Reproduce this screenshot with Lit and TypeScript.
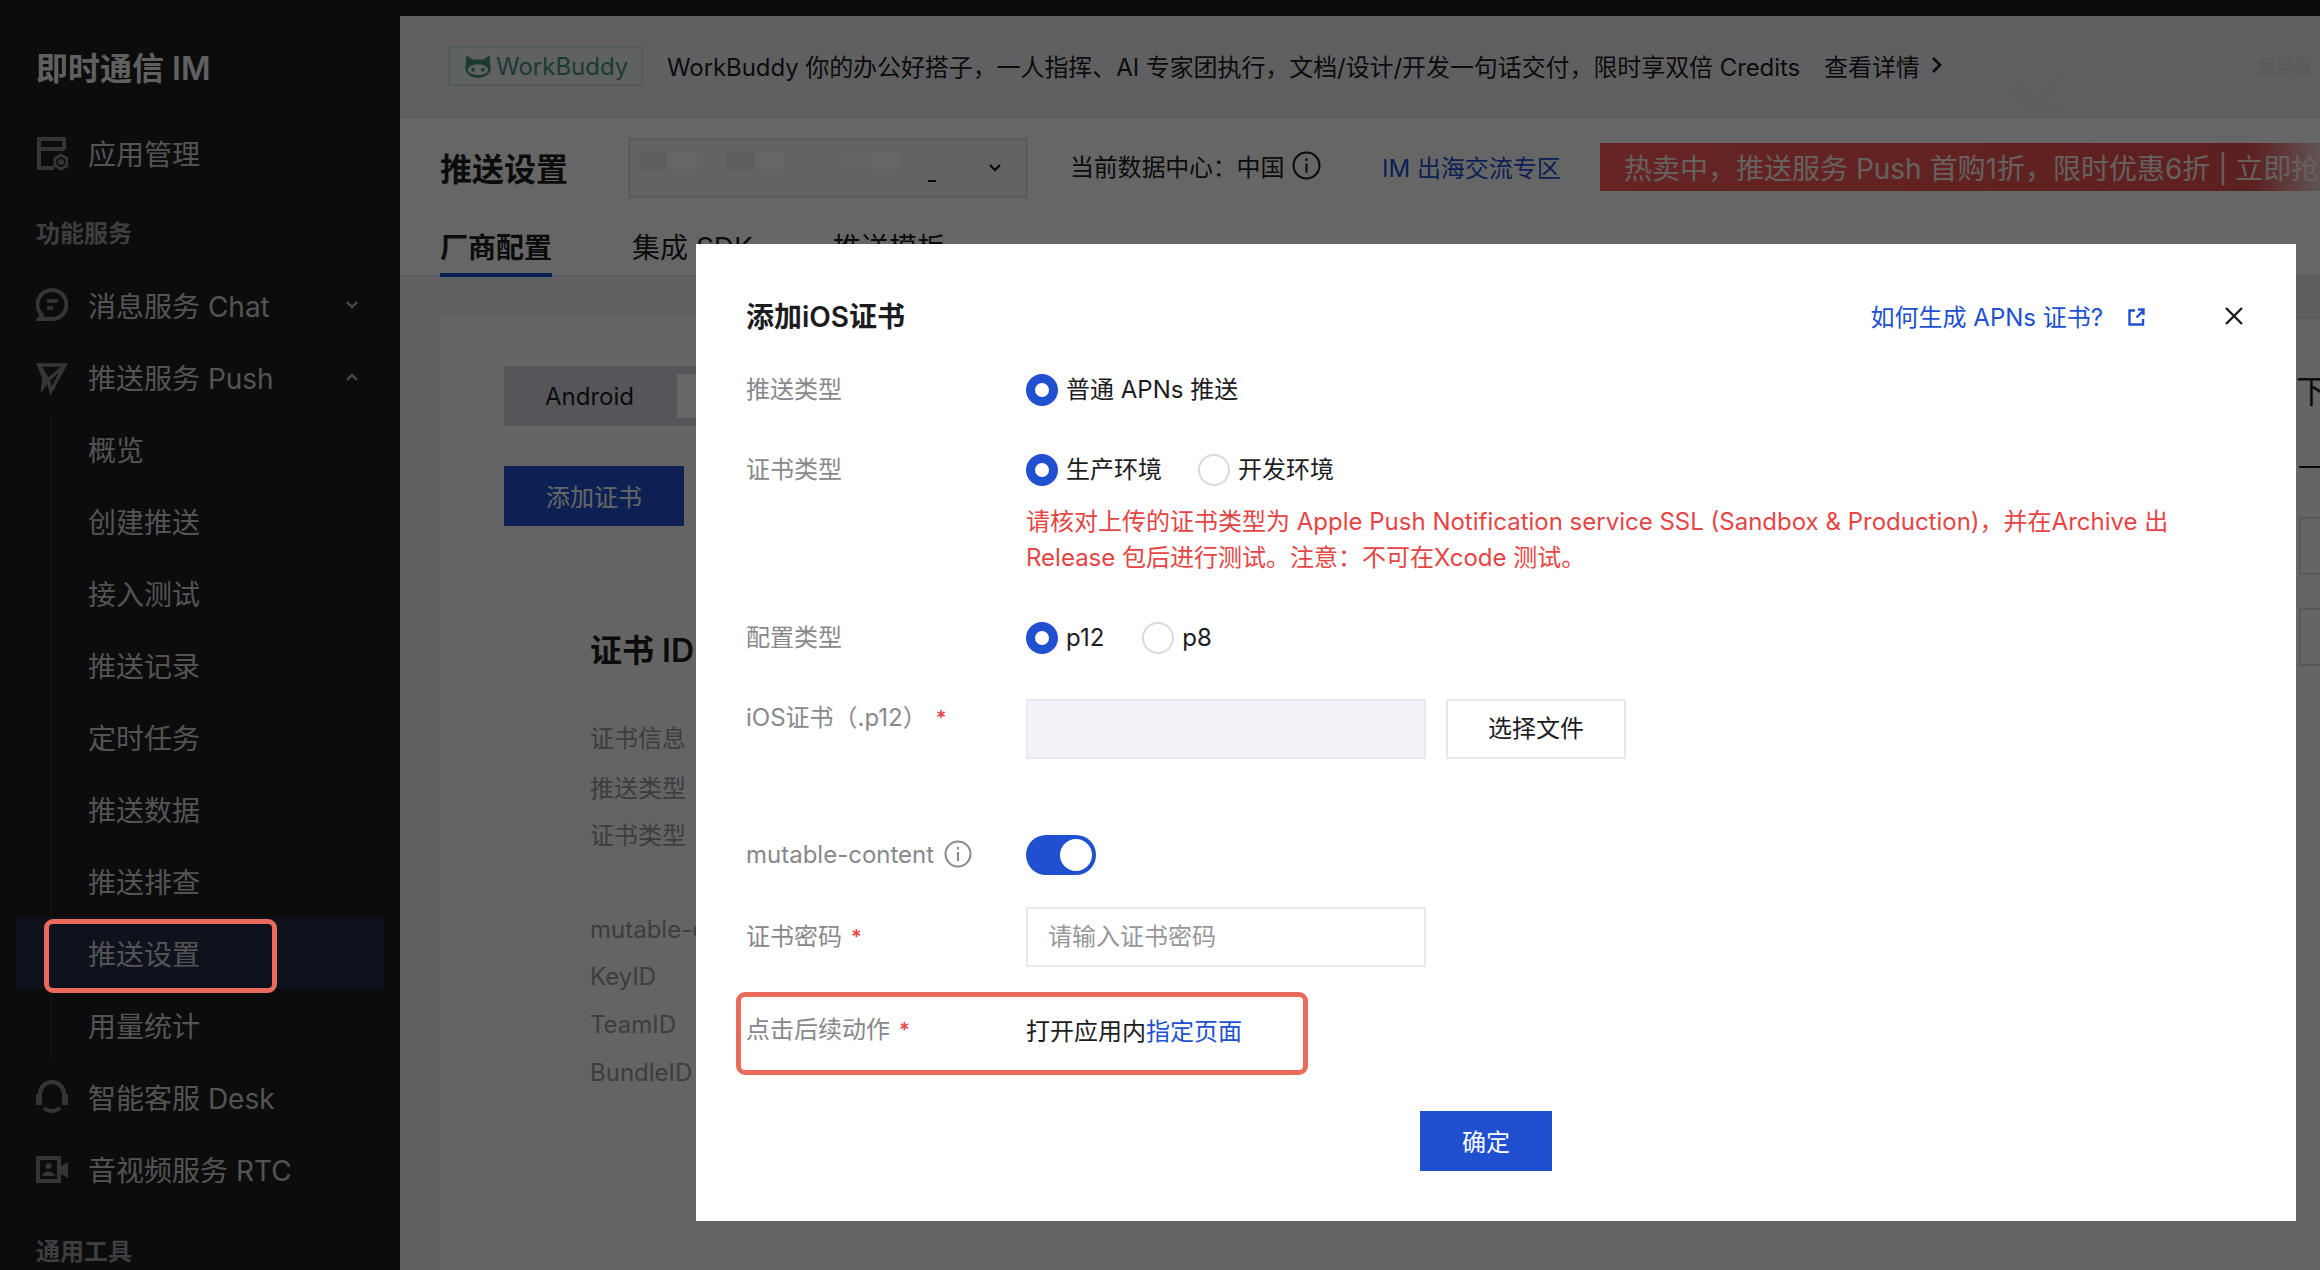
import { LitElement, html, css, svg } from "lit";
import { customElement } from "lit/decorators.js";
import { styleMap } from "lit/directives/style-map.js";

const chev = (up: boolean) => html`<svg class="chev" viewBox="0 0 16 16" fill="none" stroke="currentColor" stroke-width="2.4"><path d=${up ? "M3 11l5-5 5 5" : "M3 5l5 5 5-5"}/></svg>`;
const info = html`<svg class="info" viewBox="0 0 28 28" fill="none" stroke="currentColor" stroke-width="2"><circle cx="14" cy="14" r="12.5"/><path d="M14 12v9M14 7v2.6"/></svg>`;

const masks: [number, number, string][] = [
  [10, 27, "#ebebeb"], [37, 31, "#ffffff"], [96, 29, "#ebebeb"], [125, 28, "#ffffff"],
  [212, 30, "#fdfdfd"], [242, 27, "#ffffff"],
];

@customElement("app-root")
export class AppRoot extends LitElement {
  static styles = css`
    :host { display: block; width: 2320px; height: 1270px; overflow: hidden; position: relative; font-family: Inter, "Noto Sans CJK SC", sans-serif; font-size: 24px; color: #1c1c1f; background: #f4f5f8; }
    * { box-sizing: border-box; }
    .top { height: 16px; background: #1e1e20; }
    .shell { display: grid; grid-template-columns: 400px 1fr; height: 1254px; }

    .side { background: #1e1e20; color: #cfcfd2; display: flex; flex-direction: column; }
    .brand { height: 101px; display: flex; align-items: center; padding: 0 0 2px 36px; font-size: 32px; font-weight: 600; color: #f0f0f2; flex: none; }
    .row { height: 72px; display: flex; align-items: center; padding: 0 36px; font-size: 28px; gap: 20px; flex: none; }
    .row .ico { width: 32px; height: 36px; color: #85868a; flex: none; }
    .row .lbl { flex: 1; }
    .chev { width: 16px; height: 16px; color: #b4b4b6; margin-right: 4px; }
    .sect { font-size: 24px; font-weight: 600; color: #9a9b9e; padding-left: 36px; flex: none; display: flex; align-items: center; }
    .s1 { height: 80px; padding-top: 4px; }
    .s2 { height: 88px; }
    .subs { border-left: 2px solid #2a2a2c; margin-left: 50px; }
    .sub { height: 72px; display: flex; align-items: center; padding-left: 36px; font-size: 28px; position: relative; }
    .sub.on::before { content: ""; position: absolute; left: -36px; right: 16px; top: 0; bottom: 0; background: #232e48; }
    .sub span { position: relative; }
    .mark { position: absolute; border: 5px solid #ea6a5c; border-radius: 9px; pointer-events: none; z-index: 5; }
    .mark.a { left: 44px; top: 919px; width: 233px; height: 74px; }

    .main { display: flex; flex-direction: column; min-width: 0; background: #f1f2f6; overflow: hidden; }
    .promo { height: 102px; flex: none; display: flex; align-items: center; padding: 0 0 2px 48px; background: #eff1f5; border-bottom: 2px solid #e5e7ec; position: relative; white-space: nowrap; letter-spacing: -0.08px; }
    .wb { height: 40px; width: 195px; border: 2px solid #cfe4dc; background: #eef5f2; color: #46917f; display: flex; align-items: center; padding-left: 13px; gap: 3px; margin: 2px 24px 0 0; flex: none; letter-spacing: 0; }
    .wb svg { width: 30px; height: 25px; flex: none; }
    .more { margin-left: 24px; display: flex; align-items: center; gap: 10px; }
    .more svg { width: 14px; height: 20px; }
    .free { position: absolute; left: 1858px; top: 36px; font-size: 18px; font-weight: 600; color: #dfe0e3; }
    .deco { position: absolute; left: 1610px; top: 58px; width: 58px; height: 40px; color: #e9eaee; filter: blur(2px); }

    .pagehd { background: #fff; flex: none; }
    .head { height: 72px; display: flex; align-items: center; margin-top: 14px; padding-left: 40px; white-space: nowrap; }
    .head h1 { font-size: 32px; font-weight: 600; margin: 0 0 2px; width: 188px; flex: none; }
    .sel { width: 400px; height: 60px; border: 2px solid #e2e3ee; background: #f8f8f8; display: flex; align-items: center; justify-content: flex-end; padding-right: 23px; margin-right: 42px; position: relative; flex: none; }
    .sel .chev { color: #1c1c1f; margin: 0; }
    .mask { position: absolute; height: 18px; top: 12px; }
    .dash { position: absolute; left: 298px; top: 40px; width: 8px; height: 2px; background: #1c1c1f; }
    .center { display: flex; align-items: center; gap: 8px; margin: 0 0 6px; width: 312px; flex: none; letter-spacing: -0.2px; }
    .center .info { width: 29px; height: 29px; }
    .ocean { color: #2050d0; width: 218px; flex: none; margin-bottom: 3px; }
    .hot { flex: none; width: 740px; height: 48px; margin-top: -3px; display: flex; align-items: center; padding-left: 24px; color: #fff1ee; font-size: 28px; background: linear-gradient(90deg, #ff5c5a 0%, #e85050 88%, #f3f4f7 100%); overflow: hidden; }

    .tabs { height: 58px; display: flex; align-items: flex-start; gap: 80px; padding-left: 40px; border-bottom: 2px solid #e5e7ec; font-size: 28px; margin-top: 15px; }
    .tabs > div { height: 58px; padding-top: 7px; white-space: nowrap; }
    .tabs .on { font-weight: 600; border-bottom: 4px solid #2050d0; }

    .card { margin: 41px 0 0 40px; flex: 1; background: #fdfdfd; padding: 48px 64px; display: flex; flex-direction: column; }
    .seg { width: 800px; height: 60px; background: #d6d8e1; display: flex; align-items: center; padding: 0 8px; flex: none; }
    .seg b { font-weight: 400; width: 165px; padding-left: 33px; }
    .seg i { display: block; width: 200px; height: 44px; background: #fff; }
    .add { width: 180px; height: 60px; background: #2050d0; color: #fff; margin-top: 40px; display: flex; align-items: center; justify-content: center; flex: none; padding-bottom: 2px; }
    .panel { margin-top: 31px; height: 604px; background: #f9f9fa; padding: 72px 0 0 86px; color: #98989c; flex: none; position: relative; }
    .panel h2 { margin: 0 0 42px; font-size: 32px; font-weight: 600; color: #1c1c1f; line-height: 44px; white-space: nowrap; }
    .panel p { margin: 0; line-height: 48px; height: 47.6px; white-space: nowrap; }
    .panel h2 + p { height: 49.6px; }
    .gap { height: 46px; }
    .dl { position: absolute; left: 1792px; top: -191px; font-size: 32px; color: #1c1c1f; white-space: nowrap; }
    .band { position: absolute; left: 1772px; width: 60px; top: -280px; height: 42px; background: #e9ebf0; border: 2px solid #e3e5ea; }
    .rule { position: absolute; left: 1795px; width: 40px; top: -91px; height: 2px; background: #1c1c1f; }
    .box { position: absolute; left: 1795px; width: 60px; height: 58px; border: 2px solid #dcdde6; }

    .scrim { position: absolute; inset: 0; background: rgba(0,0,0,.6); }
    .modal { position: absolute; left: 696px; top: 244px; width: 1600px; height: 977px; background: #fff; padding: 0 50px; }
    .mhead { height: 143px; display: flex; align-items: center; margin-bottom: -143px; position: relative; }
    .mhead h3 { margin: 0 0 2px; font-size: 28px; font-weight: 600; flex: 1; color: #1c1c1f; }
    .link { color: #2050d0; display: flex; align-items: center; gap: 25px; margin-right: 79px; }
    .link svg { width: 17px; height: 18px; margin-top: 3px; }
    .x { width: 20px; height: 20px; margin-right: 2px; }

    .form { padding-top: 130px; }
    .f { display: flex; align-items: flex-start; }
    .k { width: 280px; flex: none; color: #87888c; line-height: 32px; white-space: nowrap; display: flex; align-items: center; }
    .req { color: #e54545; margin-left: 9px; font-size: 20px; font-weight: 600; }
    .v { display: flex; align-items: center; gap: 36px; line-height: 32px; }
    .v.wide { gap: 38px; }
    .radio { display: flex; align-items: center; gap: 8px; white-space: nowrap; }
    .r { width: 32px; height: 32px; border-radius: 50%; border: 2px solid #d7dae3; flex: none; }
    .r.on { border: 9px solid #2050d0; }
    .warn { margin: 18px 0 0 280px; color: #e54545; line-height: 36px; white-space: nowrap; }
    .file { width: 400px; height: 60px; background: #f2f3f8; border: 2px solid #e8e9ee; }
    .pick { width: 180px; height: 60px; border: 2px solid #e5e7ee; display: flex; align-items: center; justify-content: center; margin-left: -16px; }
    .tog { width: 70px; height: 40px; border-radius: 20px; background: #2050d0; position: relative; }
    .tog::after { content: ""; position: absolute; right: 4px; top: 4px; width: 32px; height: 32px; border-radius: 50%; background: #fff; }
    .inp { width: 400px; height: 60px; border: 2px solid #e8e9ee; padding-left: 20px; display: flex; align-items: center; color: #96979b; }
    .k .info { width: 28px; height: 28px; margin: -2px 0 0 10px; }
    .k.ios { margin-top: 3px; }
    .k.act { margin-top: -2px; }
    .blue { color: #2050d0; }
    .mark.b { left: 736px; top: 992px; width: 572px; height: 83px; }
    .ok { width: 132px; height: 60px; background: #2050d0; color: #fff; display: flex; align-items: center; justify-content: center; margin: 63px 0 0 674px; padding-bottom: 2px; }
  `;

  private nav(label: string, icon: unknown, ch?: boolean) {
    return html`<div class="row"><svg class="ico" viewBox="0 0 32 36" fill="none" stroke="currentColor" stroke-width="4">${icon}</svg><span class="lbl">${label}</span>${ch === undefined ? "" : chev(ch)}</div>`;
  }

  render() {
    const subs = ["概览", "创建推送", "接入测试", "推送记录", "定时任务", "推送数据", "推送排查", "推送设置", "用量统计"];
    return html`
      <div class="top"></div>
      <div class="shell">
        <aside class="side">
          <div class="brand">即时通信 IM</div>
          ${this.nav("应用管理", svg`<path d="M28 15V4H3v29h15M3 14h25"/><path d="M25 20l6 3.5v7L25 34l-6-3.500v-7z" stroke-width="3"/><circle cx="25" cy="27" r="1.500" stroke-width="3"/>`)}
          <div class="sect s1">功能服务</div>
          ${this.nav("消息服务 Chat", svg`<path d="M16 3a14.500 14.500 0 0 1 0 29H3l3-4A14.500 14.500 0 0 1 16 3z"/><path d="M11 14h11M11 21h6" stroke-width="3.500"/>`, false)}
          ${this.nav("推送服务 Push", svg`<path d="M3 6h26L15 32l-3-11zM29 6 12 21M3 6l5 13-1 9 5-7" stroke-width="3.500"/>`, true)}
          <div class="subs">
            ${subs.map((s) => html`<div class="sub ${s === "推送设置" ? "on" : ""}"><span>${s}</span></div>`)}
          </div>
          ${this.nav("智能客服 Desk", svg`<path d="M4 18v-3a12 12 0 0 1 24 0v3"/><rect x="0" y="15" width="6" height="11" fill="currentColor" stroke="none"/><rect x="26" y="15" width="6" height="11" fill="currentColor" stroke="none"/><path d="M8 29c5 4 11 4 16 0"/>`)}
          ${this.nav("音视频服务 RTC", svg`<path d="M2 7h21v23H2z"/><path d="M25 15l7-4v16l-7-4z" fill="currentColor" stroke="none"/><circle cx="12.500" cy="15" r="3" fill="currentColor" stroke="none"/><path d="M6 25c1-6 12-6 13 0z" fill="currentColor" stroke="none"/>`)}
          <div class="sect s2">通用工具</div>
        </aside>
        <main class="main">
          <div class="promo">
            <div class="wb">
              <svg viewBox="0 0 28 23" fill="currentColor"><path d="M3 1l6 4h10l6-4 .5 9c2 6-3 12-11.500 12S.5 16 2.500 10z"/><ellipse cx="14" cy="14.500" rx="9.500" ry="5" fill="#eef5f2"/><circle cx="9.500" cy="14.500" r="1.800"/><circle cx="18.500" cy="14.500" r="1.800"/></svg>
              WorkBuddy
            </div>
            WorkBuddy 你的办公好搭子&#xFF0C;一人指挥、AI 专家团执行&#xFF0C;文档/设计/开发一句话交付&#xFF0C;限时享双倍 Credits
            <span class="more">查看详情 <svg viewBox="0 0 14 20" fill="none" stroke="currentColor" stroke-width="2.600"><path d="M3 3l7 7-7 7"/></svg></span>
            <svg class="deco" viewBox="0 0 58 40" fill="currentColor"><path d="M0 14l10-4 16 14L48 0l4 4-22 26 26 4-2 6-36-6z"/></svg>
            <span class="free">免部署</span>
          </div>
          <div class="pagehd">
            <div class="head">
              <h1>推送设置</h1>
              <div class="sel">
                ${masks.map(([left, width, background]) => html`<span class="mask" style=${styleMap({ left: `${left}px`, width: `${width}px`, background })}></span>`)}
                <span class="dash"></span>
                ${chev(false)}
              </div>
              <div class="center">当前数据中心&#xFF1A;中国 ${info}</div>
              <div class="ocean">IM 出海交流专区</div>
              <div class="hot">热卖中&#xFF0C;推送服务 Push 首购1折&#xFF0C;限时优惠6折 | 立即抢购</div>
            </div>
            <div class="tabs"><div class="on">厂商配置</div><div>集成 SDK</div><div>推送模板</div></div>
          </div>
          <div class="card">
            <div class="seg"><b>Android</b><i></i></div>
            <div class="add">添加证书</div>
            <div class="panel">
              <h2>证书 ID</h2>
              <p>证书信息</p><p>推送类型</p><p>证书类型</p>
              <div class="gap"></div>
              <p>mutable-content</p><p>KeyID</p><p>TeamID</p><p>BundleID</p>
              <span class="band"></span>
              <span class="dl">下载</span>
              <span class="rule"></span>
              <span class="box" style="top:-40px"></span>
              <span class="box" style="top:51px"></span>
            </div>
          </div>
        </main>
      </div>
      <div class="scrim"></div>
      <div class="mark a"></div>
      <section class="modal">
        <div class="mhead">
          <h3>添加iOS证书</h3>
          <div class="link">如何生成 APNs 证书?
            <svg viewBox="0 0 17 18" fill="none" stroke="currentColor" stroke-width="2.400"><path d="M7 2.500H1.500v14H15V11M8.500 9.500 15 3M10 1.500h5.500V7"/></svg>
          </div>
          <svg class="x" viewBox="0 0 20 20" fill="none" stroke="#1c1c1f" stroke-width="2.400"><path d="M2 2l16 16M18 2 2 18"/></svg>
        </div>
        <div class="form">
          <div class="f"><div class="k">推送类型</div><div class="v"><label class="radio"><span class="r on"></span>普通 APNs 推送</label></div></div>
          <div class="f" style="margin-top:48px"><div class="k">证书类型</div><div class="v"><label class="radio"><span class="r on"></span>生产环境</label><label class="radio"><span class="r"></span>开发环境</label></div></div>
          <div class="warn">请核对上传的证书类型为 Apple Push Notification service SSL (Sandbox &amp; Production)&#xFF0C;并在Archive 出<br />Release 包后进行测试。注意&#xFF1A;不可在Xcode 测试。</div>
          <div class="f" style="margin-top:46px"><div class="k">配置类型</div><div class="v wide"><label class="radio"><span class="r on"></span>p12</label><label class="radio"><span class="r"></span>p8</label></div></div>
          <div class="f" style="margin-top:45px"><div class="k ios">iOS证书&#xFF08;.p12&#xFF09;<span class="req">*</span></div><div class="v"><div class="file"></div><div class="pick">选择文件</div></div></div>
          <div class="f" style="margin-top:76px;align-items:center"><div class="k">mutable-content ${info}</div><div class="v"><div class="tog"></div></div></div>
          <div class="f" style="margin-top:32px;align-items:center"><div class="k">证书密码<span class="req">*</span></div><div class="v"><div class="inp">请输入证书密码</div></div></div>
          <div class="f" style="margin-top:49px"><div class="k act">点击后续动作<span class="req">*</span></div><div class="v" style="gap:0">打开应用内<span class="blue">指定页面</span></div></div>
          <div class="ok">确定</div>
        </div>
      </section>
      <div class="mark b"></div>
    `;
  }
}
